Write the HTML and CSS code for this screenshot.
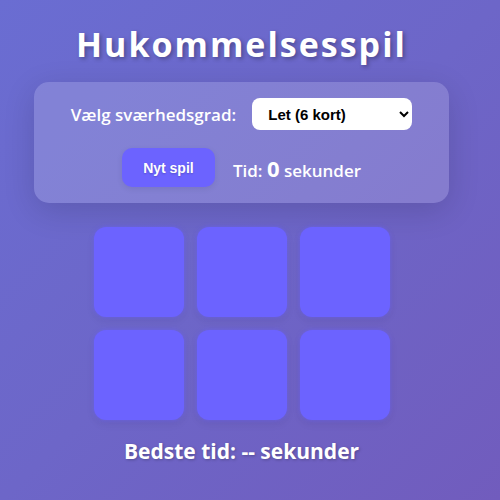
FILE: index.html
```html
<!DOCTYPE html>
<html lang="da">
<head>
<meta charset="utf-8">
<title>Hukommelsesspil</title>
<link rel="stylesheet" href="styles.css">
</head>
<body>
  <main class="game">
    <h1 class="title">Hukommelsesspil</h1>

    <section class="controls">
      <div class="controls-row">
        <label class="label" for="level">Vælg sværhedsgrad:</label>
        <select id="level" class="level-select">
          <option>Let (6 kort)</option>
          <option>Mellem (12 kort)</option>
          <option>Svær (16 kort)</option>
        </select>
      </div>
      <div class="controls-row status-row">
        <button class="new-game" type="button">Nyt spil</button>
        <div class="timer">Tid: <span class="timer-value">0</span> sekunder</div>
      </div>
    </section>

    <div class="board">
      <div class="card"></div>
      <div class="card"></div>
      <div class="card"></div>
      <div class="card"></div>
      <div class="card"></div>
      <div class="card"></div>
    </div>

    <p class="best">Bedste tid: -- sekunder</p>
  </main>
</body>
</html>
```

FILE: styles.css
```css
html, body {
  margin: 0;
  height: 100%;
  overflow: hidden;
}

body {
  background: linear-gradient(135deg, #6a6dd2 0%, #6d66c8 50%, #715cbd 100%);
  font-family: "Open Sans", "Noto Sans", sans-serif;
  color: #fff;
  padding-right: 17px;
  box-sizing: border-box;
}

.game {
  width: 415px;
  margin: 0 auto;
  padding-top: 21px;
  display: flex;
  flex-direction: column;
  align-items: center;
}

.title {
  margin: 0 0 14px;
  font-size: 34px;
  font-weight: 700;
  letter-spacing: 2px;
  line-height: 47px;
  text-shadow: 2px 2px 4px rgba(0, 0, 0, 0.3);
}

.controls {
  width: 100%;
  box-sizing: border-box;
  padding: 16px 20px;
  background: rgba(255, 255, 255, 0.16);
  border-radius: 15px;
  box-shadow: 0 8px 32px rgba(0, 0, 0, 0.14);
  display: flex;
  flex-direction: column;
  align-items: center;
  gap: 18px;
}

.controls-row {
  display: flex;
  align-items: center;
  justify-content: center;
  gap: 16px;
}

.label {
  font-size: 17px;
  font-weight: 600;
}

.level-select {
  width: 160px;
  height: 32px;
  border: none;
  border-radius: 8px;
  padding: 0 10px 0 12px;
  background: #fff;
  color: #000;
  font-family: "Liberation Sans", Arial, sans-serif;
  font-size: 15px;
  font-weight: 700;
}

.status-row {
  gap: 18px;
}

.new-game {
  width: 93px;
  height: 39px;
  border: none;
  border-radius: 10px;
  background: #6c63ff;
  color: #fff;
  font-family: "Liberation Sans", Arial, sans-serif;
  font-size: 14px;
  font-weight: 700;
  box-shadow: 0 2px 6px rgba(0, 0, 0, 0.08);
  text-shadow: 0 1px 2px rgba(0, 0, 0, 0.2);
}

.timer {
  font-size: 17px;
  font-weight: 600;
}

.timer-value {
  font-size: 22px;
  font-weight: 700;
}

.board {
  margin-top: 24px;
  display: grid;
  grid-template-columns: repeat(3, 90px);
  grid-auto-rows: 90px;
  gap: 13px;
}

.card {
  background: #6c63ff;
  border-radius: 12px;
  box-shadow: 0 0 4px rgba(108, 99, 255, 0.6), 0 4px 10px rgba(0, 0, 0, 0.06);
}

.best {
  margin: 17px 0 0;
  font-size: 21px;
  font-weight: 700;
  text-shadow: 1px 1px 3px rgba(0, 0, 0, 0.25);
}
```
